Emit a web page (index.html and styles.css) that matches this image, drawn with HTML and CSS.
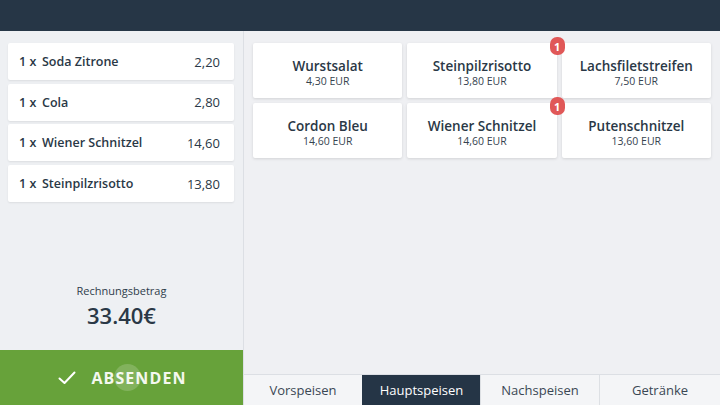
FILE: index.html
```html
<!DOCTYPE html>
<html lang="de">
<head>
<meta charset="utf-8">
<title>Kasse</title>
<link rel="stylesheet" href="styles.css">
</head>
<body>
<header class="topbar"></header>
<main class="main">
  <aside class="order">
    <ul class="order-list">
      <li class="order-item"><span class="qty">1 x</span><span class="name">Soda Zitrone</span><span class="price">2,20</span></li>
      <li class="order-item"><span class="qty">1 x</span><span class="name">Cola</span><span class="price">2,80</span></li>
      <li class="order-item"><span class="qty">1 x</span><span class="name">Wiener Schnitzel</span><span class="price">14,60</span></li>
      <li class="order-item"><span class="qty">1 x</span><span class="name">Steinpilzrisotto</span><span class="price">13,80</span></li>
    </ul>
    <div class="total">
      <div class="total-label">Rechnungsbetrag</div>
      <div class="total-value">33.40€</div>
    </div>
    <button class="send">
      <svg class="check" width="18" height="14" viewBox="0 0 18 14"><path d="M1.5 7.5 L6.5 12 L16.5 1.5" fill="none" stroke="#fff" stroke-width="2" stroke-linecap="round" stroke-linejoin="round"/></svg>
      <span class="send-text">ABSENDEN</span>
      <span class="ripple"></span>
    </button>
  </aside>
  <section class="menu">
    <div class="grid">
      <div class="dish"><div class="dish-name">Wurstsalat</div><div class="dish-price">4,30 EUR</div></div>
      <div class="dish"><div class="dish-name">Steinpilzrisotto</div><div class="dish-price">13,80 EUR</div><span class="badge">1</span></div>
      <div class="dish"><div class="dish-name">Lachsfiletstreifen</div><div class="dish-price">7,50 EUR</div></div>
      <div class="dish"><div class="dish-name">Cordon Bleu</div><div class="dish-price">14,60 EUR</div></div>
      <div class="dish"><div class="dish-name">Wiener Schnitzel</div><div class="dish-price">14,60 EUR</div><span class="badge">1</span></div>
      <div class="dish"><div class="dish-name">Putenschnitzel</div><div class="dish-price">13,60 EUR</div></div>
    </div>
    <nav class="tabs">
      <div class="tab">Vorspeisen</div>
      <div class="tab active">Hauptspeisen</div>
      <div class="tab">Nachspeisen</div>
      <div class="tab">Getränke</div>
    </nav>
  </section>
</main>
</body>
</html>
```
FILE: styles.css
```css
* { box-sizing: border-box; margin: 0; padding: 0; }
html, body { width: 720px; height: 405px; overflow: hidden; }
body {
  font-family: "Open Sans", "Noto Sans", sans-serif;
  color: #2a3846;
  background: #eff0f3;
  display: flex;
  flex-direction: column;
}
.topbar { height: 31px; background: #263646; flex: none; }
.main { flex: 1; display: flex; min-height: 0; }
.order {
  width: 244px;
  flex: none;
  display: flex;
  flex-direction: column;
  background: #eef0f3;
  border-right: 1px solid #dcdfe4;
}
.order-list {
  list-style: none;
  padding: 12px 9px 0 8px;
  display: flex;
  flex-direction: column;
  gap: 3.7px;
}
.order-item {
  height: 37px;
  background: #fff;
  border-radius: 2px;
  box-shadow: 0 1px 2px rgba(0,0,0,0.08);
  display: flex;
  align-items: center;
  padding: 0 14px 0 11px;
  font-size: 12.5px;
  font-weight: 600;
}
.qty { width: 23px; }
.name { flex: 1; }
.price { font-weight: 400; font-size: 13px; }
.total {
  margin-top: auto;
  text-align: center;
  padding-bottom: 20px;
}
.total-label { font-size: 11px; color: #2f3d4b; line-height: 16px; }
.total-value { font-size: 22px; font-weight: 600; line-height: 30px; margin-top: 1px; }
.send {
  height: 55px;
  background: #67a23a;
  border: none;
  color: #f4f8ef;
  display: flex;
  align-items: center;
  justify-content: center;
  gap: 15px;
  position: relative;
  font-family: inherit;
  padding-left: 2px;
}
.send-text { font-size: 16px; font-weight: 700; letter-spacing: 1.1px; }
.check { margin-top: 1px; }
.ripple {
  position: absolute;
  left: 114px;
  top: 14px;
  width: 27px;
  height: 27px;
  border-radius: 50%;
  background: rgba(255,255,255,0.18);
}
.menu { flex: 1; display: flex; flex-direction: column; min-width: 0; }
.grid {
  display: grid;
  grid-template-columns: repeat(3, 1fr);
  grid-auto-rows: 55px;
  gap: 5px 5px;
  padding: 12px 9px 0 9px;
  flex: 1;
  align-content: start;
}
.dish {
  background: #fff;
  border-radius: 2px;
  box-shadow: 0 1px 3px rgba(0,0,0,0.12);
  display: flex;
  flex-direction: column;
  align-items: center;
  justify-content: center;
  position: relative;
  padding-top: 4px;
}
.dish-name { font-size: 13.5px; font-weight: 600; line-height: 18px; }
.dish-price { font-size: 10.5px; line-height: 13px; color: #36434f; }
.badge {
  position: absolute;
  right: -8px;
  top: -6px;
  width: 15px;
  height: 18px;
  border-radius: 7px;
  background: #e05858;
  color: #fff;
  font-size: 11px;
  font-weight: 700;
  display: flex;
  align-items: center;
  justify-content: center;
  z-index: 2;
}
.tabs {
  height: 31px;
  display: grid;
  grid-template-columns: 118fr 118fr 119fr 121fr;
  border-top: 1px solid #dcdfe4;
  background: #f4f5f7;
}
.tab {
  display: flex;
  align-items: center;
  justify-content: center;
  font-size: 13px;
  color: #3a4754;
  border-left: 1px solid #dde0e4;
}
.tab:first-child { border-left: none; }
.tab.active { background: #253546; color: #fff; border-left-color: #253546; }
```
